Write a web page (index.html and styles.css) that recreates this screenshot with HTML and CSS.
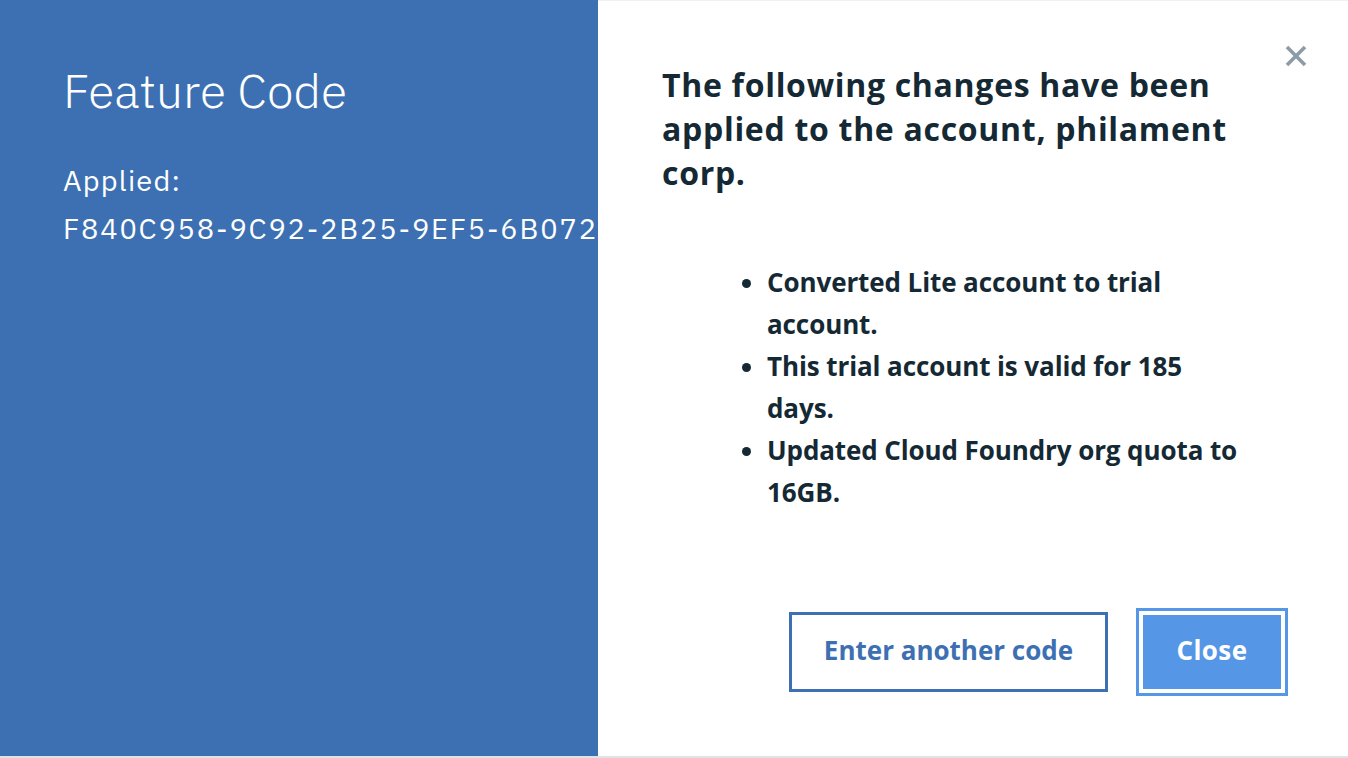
FILE: index.html
```html
<!DOCTYPE html>
<html lang="en">
<head>
<meta charset="utf-8">
<title>Feature Code</title>
<link rel="stylesheet" href="styles.css">
</head>
<body>
<div class="modal">
  <section class="side">
    <h1 class="side-title">Feature Code</h1>
    <p class="side-label">Applied:</p>
    <p class="side-code">F840C958-9C92-2B25-9EF5-6B072D8A4E31</p>
  </section>
  <section class="main">
    <button class="close-x" aria-label="Close">
      <svg width="24" height="24" viewBox="0 0 24 24"><path d="M3 3 L21 21 M21 3 L3 21" stroke="#8c9ba5" stroke-width="3.6" fill="none"/></svg>
    </button>
    <h2 class="main-title">The following changes have been applied to the account, philament corp.</h2>
    <ul class="changes">
      <li>Converted Lite account to trial account.</li>
      <li>This trial account is valid for 185 days.</li>
      <li>Updated Cloud Foundry org quota to 16GB.</li>
    </ul>
    <div class="actions">
      <button class="btn btn-secondary">Enter another code</button>
      <button class="btn btn-primary">Close</button>
    </div>
  </section>
</div>
</body>
</html>
```
FILE: styles.css
```css
* { box-sizing: border-box; }
html, body { margin: 0; padding: 0; }
body {
  background: #dfe3e6;
  font-family: "IBM Plex Sans", Roboto, "Liberation Sans", sans-serif;
  width: 1348px;
  height: 758px;
  overflow: hidden;
}
.modal {
  display: flex;
  height: 756px;
  background: #fff;
}
.side {
  width: 598px;
  flex: none;
  background: #3d70b2;
  color: #fff;
  padding: 62px 0 0 63px;
  overflow: hidden;
}
.side-title {
  margin: 0;
  font-size: 48px;
  line-height: 56px;
  font-weight: 300;
}
.side-label, .side-code {
  margin: 0;
  font-size: 29px;
  line-height: 48px;
  font-weight: 400;
  white-space: nowrap;
}
.side-label { margin-top: 38px; letter-spacing: 1.2px; }
.side-code { letter-spacing: 1.8px; }
.main {
  position: relative;
  flex: 1;
  display: flex;
  flex-direction: column;
  padding: 62px 60px 60px 64px;
  border-top: 1px solid #eef1f4;
  color: #152935;
}
.close-x {
  position: absolute;
  top: 43px;
  right: 40px;
  width: 24px;
  height: 24px;
  padding: 0;
  border: 0;
  background: none;
  cursor: pointer;
}
.close-x svg { display: block; }
.main-title {
  margin: 0;
  font-family: "Open Sans", Roboto, sans-serif;
  font-size: 32px;
  line-height: 44px;
  font-weight: 700;
  letter-spacing: 0.7px;
  padding-right: 20px;
}
.changes {
  margin: 66px 0 0 0;
  padding: 0 46px 0 105px;
  font-family: "Open Sans", Roboto, sans-serif;
  font-size: 26px;
  line-height: 42px;
  font-weight: 700;
  letter-spacing: -0.1px;
}
.actions {
  margin-top: auto;
  display: flex;
  justify-content: flex-end;
  align-items: center;
  gap: 28px;
}
.btn {
  font-family: "Open Sans", Roboto, sans-serif;
  font-size: 26px;
  font-weight: 700;
  cursor: pointer;
  padding: 0 0 4px;
}
.btn-secondary {
  width: 319px;
  height: 80px;
  background: #fff;
  color: #3d70b2;
  border: 3px solid #3d70b2;
}
.btn-primary {
  width: 152px;
  height: 88px;
  background: #5596e6;
  color: #fff;
  border: 3px solid #5596e6;
  box-shadow: inset 0 0 0 4px #fff;
  letter-spacing: 0.4px;
}
```
